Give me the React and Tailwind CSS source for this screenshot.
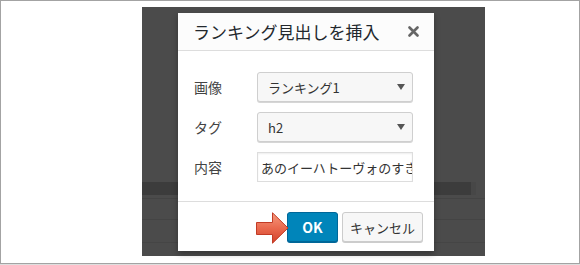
import React from 'react';

const jp = "font-['Noto_Sans_CJK_JP','Noto_Sans',sans-serif]";

// Small dropdown triangle used in the select boxes
const Caret = () => (
  <svg width="8" height="6" viewBox="0 0 8 6" className="shrink-0">
    <path d="M0 0 L8 0 L4 6 Z" fill="#555" />
  </svg>
);

// Red pointer arrow pointing at the OK button
const PointerArrow = () => (
  <svg width="33" height="32" viewBox="0 0 33 32">
    <defs>
      <linearGradient id="arrowFill" x1="0" y1="0" x2="0" y2="1">
        <stop offset="0" stopColor="#f59a7e" />
        <stop offset="0.5" stopColor="#ea6a4f" />
        <stop offset="1" stopColor="#d2412a" />
      </linearGradient>
    </defs>
    <path
      d="M0.5 10.5 L16.5 10.5 L16.5 0.8 L32 16 L16.5 31.2 L16.5 22.5 L0.5 22.5 Z"
      fill="url(#arrowFill)"
      stroke="#c23b25"
      strokeWidth="1"
      strokeLinejoin="round"
    />
  </svg>
);

const SelectBox = ({ value }) => (
  <div className="flex h-[30px] w-[156px] items-center justify-between rounded-[3px] border border-[#cfcfcf] bg-[#f7f7f7] pl-[10px] pr-[7px] shadow-[0_1px_0_#d6d6d6]">
    <span className="text-[13px] leading-none text-[#333]">{value}</span>
    <Caret />
  </div>
);

const FieldRow = ({ label, children }) => (
  <div className="flex h-[30px] items-center">
    <div className="w-[63px] text-[14px] leading-none text-[#444]">{label}</div>
    {children}
  </div>
);

function App() {
  return (
    <div className={`${jp} h-[265px] w-[580px] bg-white`}>
      <div className="h-[264px] border border-[#a3a3a3] pl-[141px] pt-[6px]">
        {/* Dimmed editor screen behind the modal */}
        <div className="relative h-[249px] w-[343px] bg-[#4b4b4b]">
          <div className="flex flex-col">
            <div className="h-[175px]" />
            <div className="flex h-[13px]">
              <div className="w-[329px] bg-[#3c3c3c]" />
              <div className="w-[5px] bg-[#474747]" />
            </div>
            <div className="h-[3px]" />
            <div className="h-[21px] border-t border-[#444]" />
            <div className="h-[23px] border-t border-[#444]" />
            <div className="border-t border-[#454545]" />
          </div>

          {/* Modal dialog */}
          <div className="absolute left-[36px] top-[6px] flex w-[256px] flex-col bg-white shadow-[0_3px_6px_rgba(0,0,0,0.3)]">
            <div className="flex h-[38px] items-center justify-between border-b border-[#dddddd] bg-[#fcfcfc] pl-[15px] pr-[15px]">
              <span className="text-[17px] leading-none text-[#23282d]">ランキング見出しを挿入</span>
              <svg width="11" height="11" viewBox="0 0 11 11">
                <path d="M1.5 1.5 L9.5 9.5 M9.5 1.5 L1.5 9.5" stroke="#666" strokeWidth="2.6" strokeLinecap="round" />
              </svg>
            </div>

            <div className="flex flex-col gap-[10px] border-b border-[#dddddd] pb-[19px] pl-[16px] pr-[21px] pt-[21px]">
              <FieldRow label="画像">
                <SelectBox value="ランキング1" />
              </FieldRow>
              <FieldRow label="タグ">
                <SelectBox value="h2" />
              </FieldRow>
              <FieldRow label="内容">
                <input
                  readOnly
                  value="あのイーハトーヴォのすきとおった風"
                  className={`${jp} h-[30px] w-[156px] border border-[#dddddd] bg-white pl-[3px] text-[13px] text-[#333] shadow-[inset_0_1px_2px_rgba(0,0,0,0.07)] outline-none`}
                />
              </FieldRow>
            </div>

            <div className="relative flex h-[49px] items-start justify-end gap-[4px] pr-[11px] pt-[10px]">
              <div className="absolute left-[78px] top-[10px]">
                <PointerArrow />
              </div>
              <button className="flex h-[30px] w-[51px] items-center justify-center rounded-[3px] border border-[#006799] bg-[#0085ba] text-[14px] font-semibold leading-none text-white shadow-[0_1px_0_#006799]">
                OK
              </button>
              <button className="flex h-[30px] w-[81px] items-center justify-center rounded-[3px] border border-[#cccccc] bg-[#f7f7f7] text-[13px] leading-none text-[#333] shadow-[0_1px_0_#cccccc]">
                キャンセル
              </button>
            </div>
          </div>
        </div>
      </div>
      <div className="h-px bg-[#dedede]" />
    </div>
  );
}

export default App;
